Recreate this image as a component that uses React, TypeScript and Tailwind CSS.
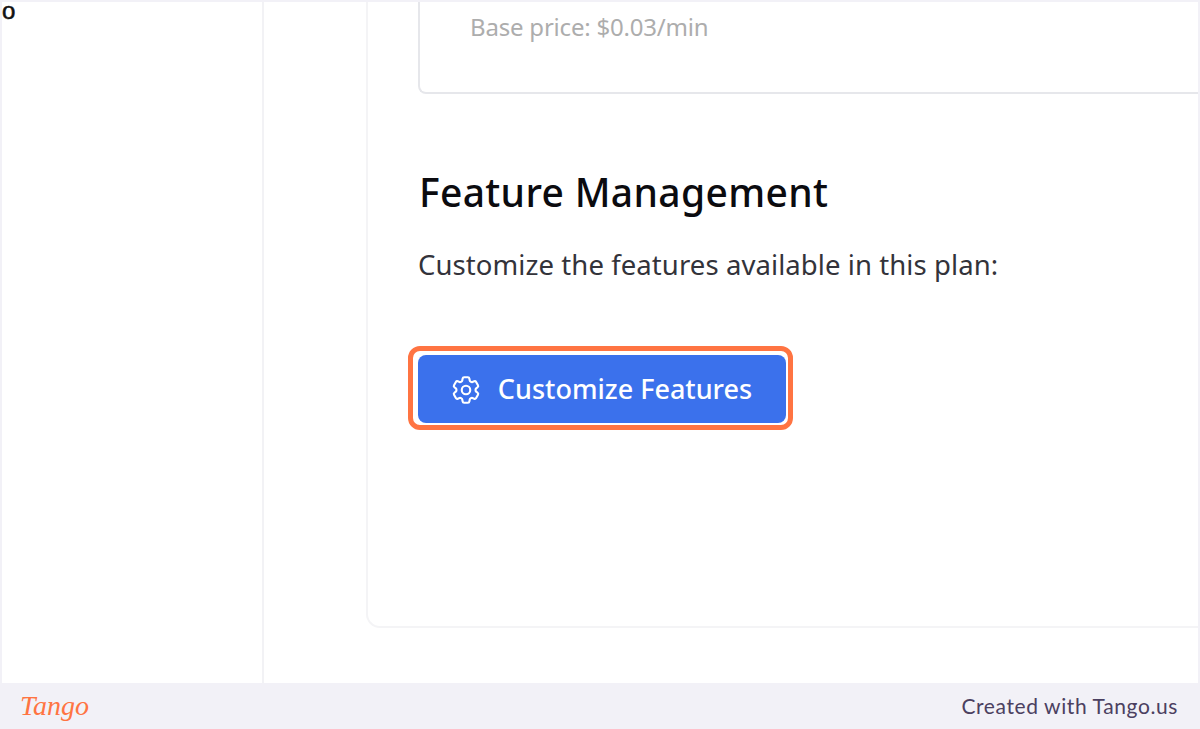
import React from 'react';
import { HiOutlineCog6Tooth } from 'react-icons/hi2';

const App: React.FC = () => {
  return (
    <div className="h-[729px] w-[1200px] flex flex-col bg-[#f2f1f7] overflow-hidden font-['Noto_Sans',sans-serif]">
      <div className="mt-[2px] mx-[2px] h-[681px] flex bg-white overflow-hidden">
        <aside className="w-[260px] shrink-0 border-r-2 border-[#f2f2f5] box-content">
          <div className="text-[#111] text-[24px] leading-[18px] font-['Liberation_Sans',sans-serif] [-webkit-text-stroke:0.6px_#111]">o</div>
        </aside>

        <main className="flex-1 min-w-0 pl-[102px] pb-[55px] flex">
          <section className="flex-1 border-l-2 border-b-2 border-[#f4f4f6] rounded-bl-[14px] pl-[50px] flex flex-col items-start">
            <div className="w-full h-[92px] border-l-2 border-b-2 border-[#e6e7eb] rounded-bl-[8px] pl-[50px] pt-[8px]">
              <p className="text-[24px] leading-[34px] text-[#adadad] tracking-[-0.2px]">Base price: $0.03/min</p>
            </div>

            <h2 className="mt-[72px] ml-[1px] text-[39px] leading-[52px] font-medium text-[#0b0b0f] tracking-[0.35px]">Feature Management</h2>
            <p className="mt-[28px] text-[27.5px] leading-[38px] text-[#33333a] tracking-[0.08px]">Customize the features available in this plan:</p>

            <div className="mt-[62px] -ml-[10px] rounded-[12px] border-[5px] border-[#ff7442] pl-[5px] pr-[2px] pt-[4px] pb-[2px]">
              <button className="h-[68px] w-[368px] pr-[3px] pt-[1px] rounded-[8px] bg-[#3b71ec] text-white flex items-center justify-center gap-[15px] text-[27px] font-medium">
                <HiOutlineCog6Tooth className="w-[34px] h-[34px]" />
                Customize Features
              </button>
            </div>
          </section>
        </main>
      </div>

      <footer className="flex-1 flex items-center justify-between pl-[20px] pr-[22px]">
        <span className="text-[28px] leading-none italic text-[#ff7442] font-['Liberation_Serif',serif]">Tango</span>
        <span className="text-[21px] text-[#4b4060] tracking-[0.6px] font-['Lato',sans-serif]">Created with Tango.us</span>
      </footer>
    </div>
  );
};

export default App;
